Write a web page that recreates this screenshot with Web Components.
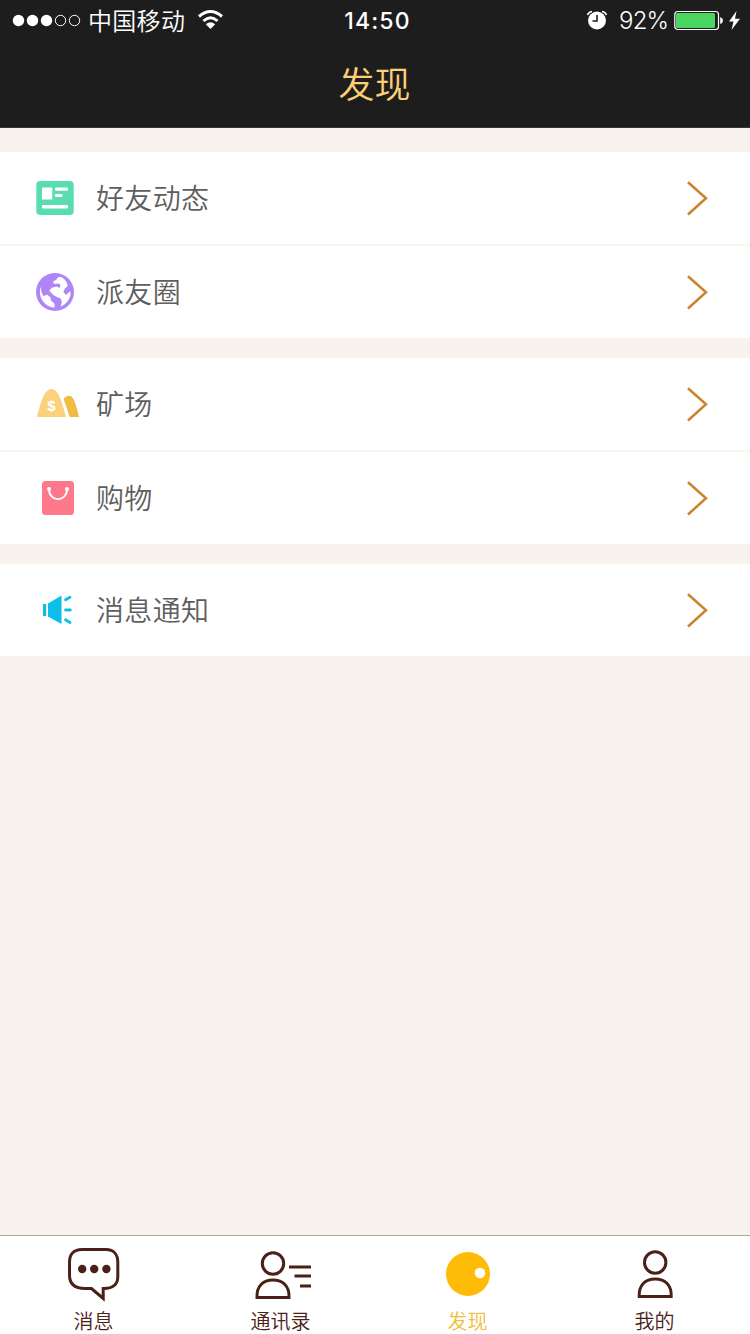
<!DOCTYPE html>
<html lang="zh-CN">
<head>
<meta charset="utf-8">
<title>发现</title>
<style>
html,body{margin:0;height:100%}
body{font-family:"Noto Sans CJK SC",sans-serif;font-weight:350;background:#f8f4ed;overflow:hidden}
</style>
</head>
<body>
<discover-page></discover-page>
<script>
const define = (name, html, setup) => {
  const t = document.createElement('template');
  t.innerHTML = html;
  customElements.define(name, class extends HTMLElement {
    constructor() {
      super();
      this.attachShadow({mode: 'open'}).append(t.content.cloneNode(true));
    }
    connectedCallback() { if (setup) setup(this); }
  });
};

const rowIcons = {
  feed: '<rect x="36.3" y="29" width="37.4" height="34" rx="4" fill="#58dcb0"/><g fill="#fff"><rect x="42" y="35.5" width="10.3" height="12"/><rect x="55" y="35.5" width="13" height="3.2" rx="1"/><rect x="55" y="42" width="7.5" height="3" rx="1"/><rect x="42" y="53" width="26" height="3.4" rx="1.2"/></g>',
  globe: '<circle cx="55" cy="46" r="19" fill="#ae86f8"/><path fill="#fff" d="M40.700 40.700C39 46 40 52 44 56.500C47 60 50.500 61.300 54.700 61.500L54.300 57.500L51 54.500L50.500 51.500L47.300 48.700L43.300 50L41.500 46ZM56.500 33.500L58.300 31L61.700 31.300C65 33 67.500 37 67.700 40L65 42.500L63.300 45.700L66 49L70.300 45L70.500 49C69.500 54 65.500 58.500 60.700 60.800L61.800 55.500L60.500 52.300L57.300 51.300L53.300 49L49.300 44.700L51.700 41.700L56.700 40.500L59.500 42L60.500 39L58.500 37.500L54.300 38L53 35.800Z"/>',
  mine: '<path fill="#fad27d" d="M37 59C40 48 43.500 31 51.500 31C59 31 62.500 46 66 59Z"/><path fill="#efbd42" d="M69.500 59C67.500 52 65.500 46 63.500 41C67 36.500 71.500 36.500 74 42C76 47 78 54 79 59Z"/><text x="51.500" y="53.300" text-anchor="middle" font-family="Liberation Sans,sans-serif" font-size="15" font-weight="700" fill="#fff">$</text>',
  bag: '<rect x="42" y="29" width="32" height="34" rx="3.500" fill="#fe788b"/><path d="M49 37C49 50.500 67 50.500 67 37" fill="none" stroke="#fff" stroke-width="2"/><g fill="#fff"><circle cx="49" cy="37" r="2"/><circle cx="67" cy="37" r="2"/></g>',
  speaker: '<g fill="#0bbfe8"><rect x="43" y="40" width="3.200" height="12"/><path d="M48 39.500L61.500 31.500V60L48 52.500Z"/></g><path d="M65.500 35.800L70 33.300M65.500 46H70.300M65.500 55.800L70 58.500" stroke="#0bbfe8" stroke-width="2.800" stroke-linecap="round"/>'
};

const person = '<circle cx="0" cy="27.500" r="10.700"/><path d="M-16 61.500C-16.500 50 -10 44 0 44C10 44 16.500 50 16 61.500Z"/>';
const tabIcons = {
  chat: '<path d="M38.500 14.500H55C63 14.500 66.800 20 66.800 27V42C66.800 49 62 53.500 53 53.500H52.200V63.500L40.500 53.500H34C24 53.500 18.500 49 18.500 40V27C18.500 19 23 14.500 31 14.500Z"/><g fill="currentColor" stroke="none"><circle cx="31.200" cy="34" r="4.200"/><circle cx="43.200" cy="34" r="4.200"/><circle cx="55.400" cy="34" r="4.200"/></g>',
  contacts: '<g transform="translate(35 1)">' + person + '</g><path d="M51 32H73M56.500 41H73M62 51H73"/>',
  discover: '<circle cx="43" cy="39" r="22" fill="#febc08" stroke="none"/><circle cx="55" cy="38" r="5.200" fill="#fff" stroke="none"/>',
  me: '<g transform="translate(43.200 0)">' + person + '</g>'
};

define('status-bar', `
<style>
:host{display:flex;align-items:center;height:40px;color:#fff;font-size:24px;line-height:40px;white-space:nowrap}
.side{flex:1;display:flex;align-items:center}
.carrier{height:41px;line-height:39px;letter-spacing:.3px}
.dots{margin-left:12px;margin-right:7px}
.wifi{margin-left:12px}
.time{font:500 23px/42px Inter,sans-serif;letter-spacing:1.2px;margin-left:5px;width:70px;text-align:center;padding-top:2px}
.end{justify-content:flex-end}
.pct{font:300 24px/42px Inter,sans-serif;width:49px;margin:0 6px 0 11px;letter-spacing:-.8px;padding-top:2px}
svg{display:block;flex:none}
</style>
<div class="side">
 <svg class="dots" width="69" height="40"><g fill="#fff"><circle cx="6.500" cy="20.500" r="5.700"/><circle cx="20.500" cy="20.500" r="5.700"/><circle cx="34.500" cy="20.500" r="5.700"/></g><g fill="none" stroke="#fff"><circle cx="48.500" cy="20.500" r="5.200"/><circle cx="62.500" cy="20.500" r="5.200"/></g></svg>
 <span class="carrier">中国移动</span>
 <svg class="wifi" width="28" height="40"><g fill="none" stroke="#fff" stroke-width="3"><path d="M2 16.500Q13.500 6.500 25 16.500M6.500 21Q13.500 14.500 20.500 21"/></g><path fill="#fff" d="M8.800 24.200Q13.500 20.500 18.200 24.200L13.500 29Z"/></svg>
</div>
<span class="time">14:50</span>
<div class="side end">
 <svg width="22" height="40"><circle cx="11" cy="20.500" r="9" fill="#fff"/><path d="M11 15V21H6.500" fill="none" stroke="#1d1d1d" stroke-width="1.600"/><path d="M1.500 15Q2.500 12 6 11.500M16 11.500Q19.500 12 20.500 15" fill="none" stroke="#fff" stroke-width="1.500"/></svg>
 <span class="pct">92%</span>
 <svg width="76" height="40"><rect x=".800" y="11.500" width="43.700" height="18" rx="3" fill="none" stroke="#fff" stroke-width="1.200"/><rect x="2" y="13" width="39" height="15" rx="1.500" fill="#4bd662"/><path d="M46.200 17Q49 18 49 20.500T46.200 24Z" fill="#fff"/><path d="M62.500 11L55 21.500H59.500L57.500 30L66 18.800H61Z" fill="#fff"/></svg>
</div>`);

define('nav-header', `
<style>
:host{display:block;height:128px;background:#1d1d1d;box-sizing:border-box;border-bottom:1px solid #383634}
h1{margin:0;height:87px;font-size:36px;line-height:84px;font-weight:350;color:#fdcf77;text-align:center;padding-right:1px}
</style>
<slot></slot><h1>发现</h1>`);

define('menu-group', `
<style>:host{display:flex;flex-direction:column;gap:2px;background:#f9f6f0}</style><slot></slot>`);

define('menu-row', `
<style>
:host{display:flex;align-items:center;height:92px;background:#fff;color:#5e5e5e;font-size:28px;line-height:90px}
svg{display:block;flex:none}
.label{flex:1;height:92px;letter-spacing:.35px}
</style>
<svg class="icon" width="96" height="92"></svg>
<span class="label"><slot></slot></span>
<svg width="65" height="92"><path d="M3 30.300L21 46.300L3 62.500" fill="none" stroke="#cb8329" stroke-width="2.500"/></svg>`,
el => { el.shadowRoot.querySelector('.icon').innerHTML = rowIcons[el.getAttribute('icon')]; });

define('tab-item', `
<style>
:host{display:flex;flex-direction:column;align-items:center;flex:1;color:#4a2118;font-size:20px;line-height:30px}
:host([active]) span{color:#f2bd3d}
svg{display:block;flex:none;height:70px;width:86px;fill:none;stroke:currentColor;stroke-width:3}
</style>
<svg viewBox="0 1 86 70"></svg><span><slot></slot></span>`,
el => { el.shadowRoot.querySelector('svg').innerHTML = tabIcons[el.getAttribute('icon')]; });

define('tab-bar', `
<style>:host{display:flex;height:99px;box-sizing:border-box;border-top:1px solid #aea6a0;background:#fff;padding-right:2px}</style><slot></slot>`);

define('discover-page', `
<style>
:host{display:flex;flex-direction:column;height:1334px;width:750px;background:#f8f4ed}
main{flex:1;display:flex;flex-direction:column;gap:20px;padding-top:24px}
</style>
<nav-header><status-bar></status-bar></nav-header>
<main>
 <menu-group><menu-row icon="feed">好友动态</menu-row><menu-row icon="globe">派友圈</menu-row></menu-group>
 <menu-group><menu-row icon="mine">矿场</menu-row><menu-row icon="bag">购物</menu-row></menu-group>
 <menu-group><menu-row icon="speaker">消息通知</menu-row></menu-group>
</main>
<tab-bar>
 <tab-item icon="chat">消息</tab-item><tab-item icon="contacts">通讯录</tab-item><tab-item icon="discover" active>发现</tab-item><tab-item icon="me">我的</tab-item>
</tab-bar>`);
</script>
</body>
</html>
